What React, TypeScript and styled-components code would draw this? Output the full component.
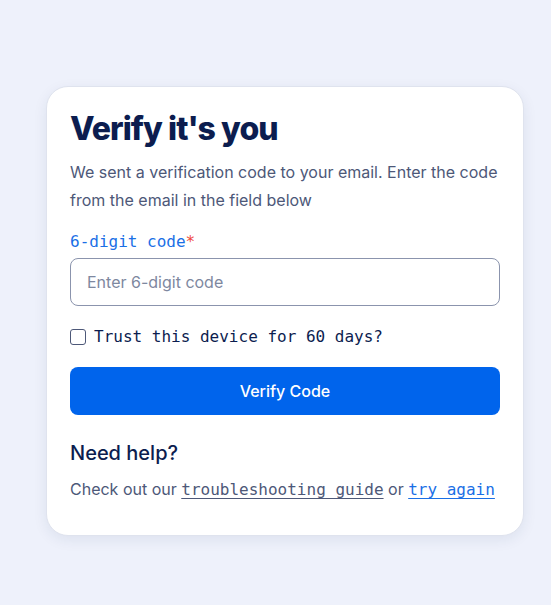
import React from 'react'
import styled, { createGlobalStyle } from 'styled-components'

const GlobalStyle = createGlobalStyle`
  html, body {
    margin: 0;
    padding: 0;
    background: #eef1fb;
  }
  body {
    font-family: Inter, 'Noto Sans', sans-serif;
  }
`

const Page = styled.div`
  min-height: 605px;
  box-sizing: border-box;
  padding: 86px 0 0 46px;
`

const Card = styled.div`
  width: 478px;
  box-sizing: border-box;
  background: #ffffff;
  border: 1px solid #dfe3ee;
  border-radius: 22px;
  padding: 20px 23px 33px;
  box-shadow: 0 4px 14px rgba(30, 45, 90, 0.08);
`

const Title = styled.h1`
  margin: 0;
  font-size: 32px;
  font-weight: 800;
  letter-spacing: -0.9px;
  line-height: 44px;
  color: #0c1d4f;
`

const Description = styled.p`
  margin: 7px 0 0;
  font-size: 16px;
  line-height: 28px;
  color: #4d5878;
`

const Label = styled.label`
  display: block;
  margin-top: 18px;
  font-family: 'DejaVu Sans Mono', 'Liberation Mono', monospace;
  font-size: 16px;
  line-height: 20px;
  color: #1a6fe6;
`

const Required = styled.span`
  color: #ef4a3c;
`

const Input = styled.input`
  display: block;
  width: 100%;
  height: 48px;
  box-sizing: border-box;
  margin-top: 6px;
  padding: 0 16px;
  border: 1px solid #8b94ad;
  border-radius: 8px;
  font-family: Inter, sans-serif;
  font-size: 16px;
  color: #0c1d4f;
  outline: none;
  &::placeholder {
    color: #7e889f;
  }
`

const CheckRow = styled.label`
  display: flex;
  align-items: center;
  gap: 8px;
  margin-top: 21px;
  font-family: 'DejaVu Sans Mono', 'Liberation Mono', monospace;
  font-size: 16px;
  line-height: 20px;
  color: #0c1d4f;
`

const Box = styled.input`
  appearance: none;
  width: 16px;
  height: 16px;
  margin: 0;
  border: 1.5px solid #4d5878;
  border-radius: 3px;
  background: #fff;
`

const Button = styled.button`
  display: block;
  width: 100%;
  height: 48px;
  margin-top: 20px;
  border: none;
  border-radius: 8px;
  background: #0064ec;
  color: #ffffff;
  font-family: Inter, sans-serif;
  font-size: 16px;
  font-weight: 500;
`

const HelpTitle = styled.h2`
  margin: 24px 0 0;
  font-size: 20px;
  font-weight: 500;
  line-height: 28px;
  color: #0c1d4f;
`

const HelpText = styled.p`
  margin: 10px 0 0;
  font-size: 16px;
  line-height: 24px;
  color: #4d5878;
`

const Link = styled.a<{ primary?: boolean }>`
  font-family: 'DejaVu Sans Mono', 'Liberation Mono', monospace;
  font-size: 16px;
  color: ${p => (p.primary ? '#1a6fe6' : '#4d5878')};
  text-decoration: underline;
  text-underline-offset: 3px;
`

export default function App() {
  return (
    <Page>
      <GlobalStyle />
      <Card>
        <Title>Verify it's you</Title>
        <Description>
          We sent a verification code to your email. Enter the code from the email in the field below
        </Description>
        <Label htmlFor="code">
          6-digit code<Required>*</Required>
        </Label>
        <Input id="code" placeholder="Enter 6-digit code" />
        <CheckRow>
          <Box type="checkbox" />
          Trust this device for 60 days?
        </CheckRow>
        <Button>Verify Code</Button>
        <HelpTitle>Need help?</HelpTitle>
        <HelpText>
          Check out our <Link href="#">troubleshooting guide</Link> or{' '}
          <Link href="#" primary>try again</Link>
        </HelpText>
      </Card>
    </Page>
  )
}
